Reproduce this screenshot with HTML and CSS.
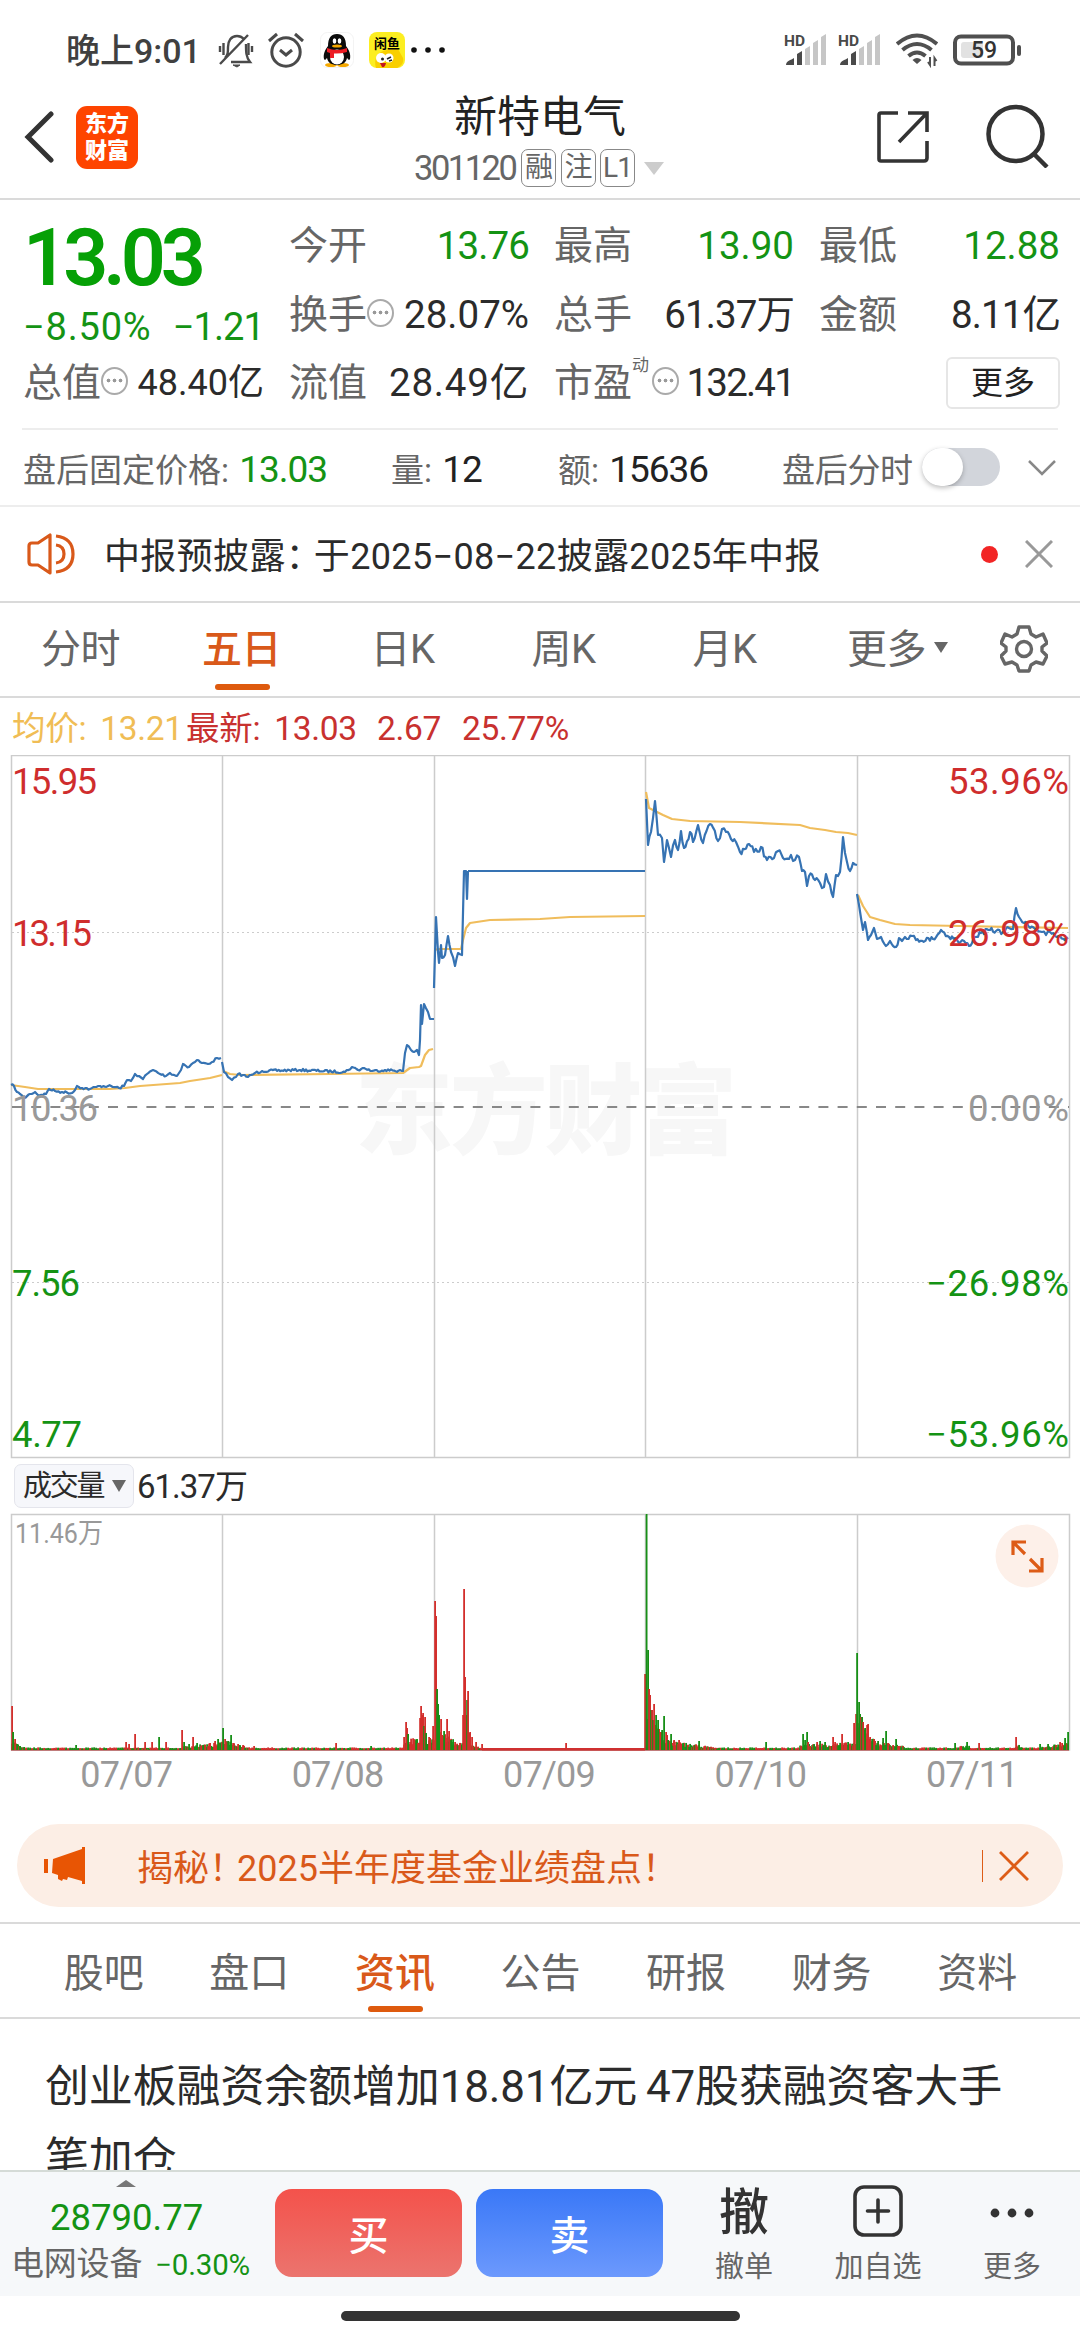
FILE: index.html
```html
<!DOCTYPE html>
<html lang="zh-CN">
<head>
    <meta charset="UTF-8">
    <meta name="viewport" content="width=device-width, initial-scale=1.0">
    <title>新特电气 301120</title>
    <link rel="stylesheet" href="styles.css">
</head>
<body>

    <!-- 状态栏 -->
    <div class="status-bar">
        <span class="time">晚上9:01</span>
        <svg class="ic-bell" width="36" height="36" viewBox="0 0 36 36" fill="none" stroke="#4a4a4a" stroke-width="2.4">
            <path d="M2 32 30 3M7 26c3-3 3-6 3-11 0-6 3-11 9-11 3 0 5 1 7 3M28 12c0 8 0 13 4 18H13" />
            <path d="M15 33h7l-3 2z" fill="#4a4a4a" stroke-width="1" />
            <path d="M2 14v6M5.500 11v12M30.500 11v12M34 14v6" />
        </svg>
        <svg class="ic-alarm" width="38" height="38" viewBox="0 0 38 38" fill="none" stroke="#4a4a4a" stroke-width="3">
            <circle cx="19" cy="21" r="14.200" />
            <path d="M13 19l6 5 6-5M2 10l8-7M36 10l-8-7" />
        </svg>
        <svg class="ic-qq" width="34" height="36" viewBox="0 0 34 36">
            <rect x=".5" y=".5" width="33" height="35" rx="7" fill="#fff" stroke="#f3f3f3" />
            <ellipse cx="11" cy="33" rx="6" ry="2" fill="#f5a800" />
            <ellipse cx="23" cy="33" rx="6" ry="2" fill="#f5a800" />
            <path d="M8 14C8 6 11 2 17 2s9 4 9 12c3 4 5 8 4 13-1 2-2 0-3-1-1 5-5 7-10 7S8 31 7 26c-1 1-2 3-3 1-1-5 1-9 4-13z" fill="#0b0b0b" />
            <ellipse cx="17" cy="25" rx="7" ry="7.500" fill="#fff" />
            <ellipse cx="14.500" cy="9" rx="1.800" ry="2.800" fill="#fff" />
            <ellipse cx="19.500" cy="9" rx="1.800" ry="2.800" fill="#fff" />
            <ellipse cx="17" cy="14" rx="5" ry="1.600" fill="#f5a800" />
            <path d="M7 16q10 4 20 0v4q-7 2-13 1.500V26h-4v-5l-3-1z" fill="#ec1c24" />
        </svg>
        <svg class="ic-fish" width="36" height="36" viewBox="0 0 36 36">
            <rect width="36" height="36" rx="8" fill="#fcee21" />
            <path d="M7 36c-3-9 2-17 11-18l11-1 5 9c1 5-2 8-6 10z" fill="#f9cf00" />
            <circle cx="12" cy="26" r="5" fill="#fff" />
            <circle cx="20" cy="26" r="4.500" fill="#fff" />
            <circle cx="13.500" cy="27" r="1.500" fill="#222" />
            <path d="M18 27l4-2M20 29l3-1" stroke="#222" stroke-width="1.500" />
            <path d="M11 31h6q-1 5-4 4z" fill="#c3161c" />
            <text x="18" y="15.500" text-anchor="middle" class="fish-text">闲鱼</text>
        </svg>
        <svg class="ic-dots" width="34" height="8" viewBox="0 0 34 8" fill="#111"><circle cx="3" cy="4" r="2.800" /><circle cx="17" cy="4" r="2.800" /><circle cx="31" cy="4" r="2.800" /></svg>

        <svg class="ic-signal" width="44" height="36" viewBox="-2 -4 44 36">
            <text x="-1" y="12" class="hd">HD</text>
            <path d="M1 31c0-4 5-5 8-7v7zM12 20l5-3v14h-5z" fill="#4a4a4a" />
            <path d="M20 15l5-3v19h-5zM28 9l5-3v25h-5zM36 3l5-3v31h-5z" fill="#c6c6c6" />
        </svg>
        <svg class="ic-signal" width="44" height="36" viewBox="-2 -4 44 36">
            <text x="-1" y="12" class="hd">HD</text>
            <path d="M1 31c0-4 5-5 8-7v7zM12 20l5-3v14h-5z" fill="#4a4a4a" />
            <path d="M20 15l5-3v19h-5zM28 9l5-3v25h-5zM36 3l5-3v31h-5z" fill="#c6c6c6" />
        </svg>
        <svg class="ic-wifi" width="42" height="36" viewBox="0 0 42 36" fill="none" stroke="#505050" stroke-width="4">
            <path d="M1 12q20-17 40 0M6.500 18q14.500-12 29 0M12.500 24q8.500-7 17 0" />
            <path d="M16.500 28q4.500-4 9 0L21 32z" fill="#505050" stroke="none" />
            <path d="M34 25v8l-2-3M38.500 34v-8l2 3" stroke-width="2" />
        </svg>
        <svg class="ic-battery" width="70" height="32" viewBox="0 0 70 32">
            <rect x="8" y="8" width="22" height="16" rx="3" fill="#e2e2e2" />
            <rect x="2" y="2.500" width="58" height="27" rx="6" fill="none" stroke="#4f4f4f" stroke-width="4" />
            <rect x="64" y="11" width="4" height="11" rx="2" fill="#4f4f4f" />
            <text x="31" y="24" text-anchor="middle" class="battery-text">59</text>
        </svg>
    </div>

    <!-- 标题栏 -->
    <div class="header">
        <svg class="back" width="30" height="52" viewBox="0 0 30 52" fill="none" stroke="#333" stroke-width="5" stroke-linecap="round"><path d="M27 3 4 26l23 23" /></svg>
        <div class="logo">东方<br>财富</div>
        <div class="title">
            <div class="name">新特电气</div>
            <div class="code"><span>301120</span><i>融</i><i>注</i><i>L1</i><b></b></div>
        </div>
        <svg class="share" width="54" height="54" viewBox="0 0 54 54" fill="none" stroke="#333" stroke-width="3.600"><path d="M22 3H5q-2 0-2 2v44q0 2 2 2h43q3 0 3-3V31M32 3h19v19M51 3 23 32" /></svg>
        <svg class="search" width="64" height="64" viewBox="0 0 64 64" fill="none" stroke="#333" stroke-width="4.500"><circle cx="29.500" cy="30" r="27" /><path d="M48 50l13 13" /></svg>
    </div>

    <!-- 行情 -->
    <div class="quote">
        <div class="col">
            <div class="price green">13.03</div>
            <div class="delta green"><span class="wide">−8.50%</span><span class="tight">−1.21</span></div>
            <div class="row small"><label>总值</label><em class="tip"></em><span>48.40亿</span></div>
        </div>
        <div class="col">
            <div class="row"><label>今开</label><span class="green tight">13.76</span></div>
            <div class="row"><label>换手</label><em class="tip"></em><span>28.07%</span></div>
            <div class="row"><label>流值</label><span class="wide">28.49亿</span></div>
        </div>
        <div class="col">
            <div class="row"><label>最高</label><span class="green">13.90</span></div>
            <div class="row"><label>总手</label><span class="tight">61.37万</span></div>
            <div class="row"><label>市盈</label><sup>动</sup><em class="tip"></em><span class="pe">132.41</span></div>
        </div>
        <div class="col">
            <div class="row"><label>最低</label><span class="green">12.88</span></div>
            <div class="row"><label>金额</label><span class="tight">8.11亿</span></div>
            <div class="row end"><button class="more">更多</button></div>
        </div>
    </div>

    <div class="after">
        <span class="after-price">盘后固定价格: <b class="green">13.03</b></span>
        <span class="after-vol">量: <b>12</b></span>
        <span class="after-amt">额: <b>15636</b></span>
        <span class="after-label">盘后分时</span>
        <div class="switch"><i></i></div>
        <svg class="chev" width="28" height="18" viewBox="0 0 28 18" fill="none" stroke="#888" stroke-width="2.500"><path d="M1 2l13 13L27 2" /></svg>
    </div>

    <div class="notice">
        <svg width="48" height="42" viewBox="0 0 48 42" fill="none" stroke="#d9591a" stroke-width="3.200" stroke-linejoin="round">
            <path d="M2 13q0-3 3-3h6l12-8v38l-12-8H5q-3 0-3-3zM29 12q8 1 8 9t-8 9M29 3q17 2 17 18T29 39" />
        </svg>
        <p>中报预披露<span class="punc">：</span>于2025−08−22披露2025年中报</p>
        <i class="red-dot"></i>
        <svg width="28" height="28" viewBox="0 0 28 28" stroke="#999" stroke-width="3"><path d="M1 1l26 26M27 1 1 27" /></svg>
    </div>

    <!-- K线切换 -->
    <div class="tabs">
        <span>分时</span>
        <span class="on">五日</span>
        <span>日K</span>
        <span>周K</span>
        <span>月K</span>
        <span class="tab-more">更多<b></b></span>
        <svg width="48" height="50" viewBox="0 0 48 50" fill="none" stroke="#666" stroke-width="3.400" stroke-linejoin="round">
            <path d="M19 3h10l2 7 5 3 7-3 4 9-5 4v4l5 5-4 8-7-2-5 3-2 6H19l-2-6-5-3-7 2-4-8 5-5v-4l-5-4 4-9 7 3 5-3z" />
            <circle cx="24" cy="25" r="7.500" />
        </svg>
    </div>

    <div class="legend"><span class="avg">均价: 13.21</span><span class="last">最新: 13.03</span><span class="chg">2.67</span><span class="pct">25.77%</span></div>

    <svg class="price-chart" width="1080" height="704" viewBox="0 755 1080 704">
        <g class="watermark"><text x="355" y="1146" textLength="382">东方财富</text></g>
        <path class="grid" d="M11.500 755.500H1069.500V1457.500H11.500zM222.500 755V1457M434.500 755V1457M645.500 755V1457M857.500 755V1457" />
        <path class="dotted" d="M12 932.500H1069M12 1282.500H1069" />
        <path class="dashed" d="M12 1107H1069" />
        <g id="avgLines"></g>
        <g id="priceLines"></g>
        <g class="axis">
            <text class="up" x="12" y="794" textLength="85">15.95</text>
            <text class="up" x="12" y="946" textLength="80">13.15</text>
            <text class="flat" x="12" y="1121" textLength="86">10.36</text>
            <text class="down" x="12" y="1296" textLength="68">7.56</text>
            <text class="down" x="12" y="1447" textLength="70">4.77</text>
            <text class="up" x="948" y="794" textLength="121">53.96%</text>
            <text class="up" x="948" y="946" textLength="121">26.98%</text>
            <text class="flat" x="968" y="1121" textLength="101">0.00%</text>
            <text class="down" x="926" y="1296" textLength="143">−26.98%</text>
            <text class="down" x="926" y="1447" textLength="143">−53.96%</text>
        </g>
    </svg>

    <div class="vol-head"><span class="chip">成交量<b></b></span><span class="vol-value">61.37万</span></div>

    <div class="vol-wrap">
        <svg class="vol-chart" width="1080" height="238" viewBox="0 1513 1080 238">
            <path class="grid" d="M11.500 1514.500H1069.500V1750H11.500zM222.500 1514V1750M434.500 1514V1750M645.500 1514V1750M857.500 1514V1750" />
            <text class="vol-max" x="15" y="1543" textLength="88" lengthAdjust="spacingAndGlyphs">11.46万</text>
            <g id="volBars"></g>
        </svg>
        <svg class="expand" width="64" height="64" viewBox="0 0 64 64" fill="none" stroke="#dd5c17" stroke-width="3.200">
            <circle cx="32" cy="32" r="31.500" fill="#fdf0e9" stroke="none" />
            <path d="M18 31V18h13M18 18l12 12M47 34v13H34M47 47 35 35" />
        </svg>
    </div>
    <div class="dates"><span>07/07</span><span>07/08</span><span>07/09</span><span>07/10</span><span>07/11</span></div>

    <div class="banner">
        <svg width="42" height="38" viewBox="0 0 42 38" fill="#e85504"><path d="M0 12h4v14H0zM9 12 38 2V0h3v37h-3v-3l-14-4-1 3-4-1-1 2-4-2v-4l-6-2z" /></svg>
        <p>揭秘<span class="punc">！</span>2025半年度基金业绩盘点！</p>
        <i></i>
        <svg width="30" height="30" viewBox="0 0 30 30" stroke="#dd5c17" stroke-width="2.800"><path d="M1 1l28 28M29 1 1 29" /></svg>
    </div>

    <!-- 资讯 -->
    <div class="info-tabs">
        <span>股吧</span><span>盘口</span><span class="on">资讯</span><span>公告</span><span>研报</span><span>财务</span><span>资料</span>
    </div>
    <div class="news">创业板融资余额增加18.81亿元 47股获融资客大手笔加仓</div>

    <!-- 底部栏 -->
    <div class="footer">
        <div class="index">
            <i></i>
            <div class="index-value green">28790.77</div>
            <div class="index-name">电网设备<span class="green">−0.30%</span></div>
        </div>
        <button class="trade buy">买</button>
        <button class="trade sell">卖</button>
        <div class="tool t1"><div class="tool-icon big">撤</div>撤单</div>
        <div class="tool t2"><div class="tool-icon"><svg width="50" height="52" viewBox="0 0 50 52" fill="none" stroke="#333" stroke-width="3.600" stroke-linecap="round"><rect x="2" y="2" width="46" height="48" rx="9" /><path d="M25 15v22M14.500 26h21" /></svg></div>加自选</div>
        <div class="tool t3"><div class="tool-icon"><svg width="44" height="12" viewBox="0 0 44 12" fill="#333"><circle cx="5" cy="6" r="4.400" /><circle cx="22" cy="6" r="4.400" /><circle cx="39" cy="6" r="4.400" /></svg></div>更多</div>
    </div>
    <div class="home"><i></i></div>

    <script src="chart.js"></script>
</body>
</html>
```

FILE: styles.css
```css
* {
    box-sizing: border-box;
}
body {
    margin: 0;
    width: 1080px;
    height: 2340px;
    overflow: hidden;
    background-color: #fff;
    color: #2b2b2b;
    font-family: Roboto, "Noto Sans CJK SC", sans-serif;
    display: flex;
    flex-direction: column;
}
body > * {
    flex: none;
}
svg {
    display: block;
    flex: none;
}
p {
    margin: 0;
}
i, em {
    font-style: normal;
}
button {
    font-family: inherit;
    padding: 0;
}
.green {
    color: #149314;
}

/* 状态栏 */
.status-bar {
    height: 85px;
    padding: 15px 57px 0 66px;
    display: flex;
    align-items: center;
    color: #404040;
}
.time {
    width: 152px;
    margin-top: -3px;
    font-size: 34px;
    font-weight: 500;
    white-space: nowrap;
}
.ic-alarm { margin-left: 13px; }
.ic-qq { margin-left: 15px; }
.ic-fish { margin-left: 15px; }
.ic-dots { margin-left: 6px; }
.ic-signal {
    margin-left: 10px;
    margin-top: -4px;
}
.ic-dots + .ic-signal { margin-left: auto; }
.ic-wifi { margin-left: 15px; }
.ic-battery { margin-left: 15px; }
.fish-text {
    font-size: 13px;
    font-weight: 700;
}
.hd {
    font-size: 15.500px;
    font-weight: 700;
    fill: #4a4a4a;
}
.battery-text {
    font-size: 23px;
    font-weight: 500;
    fill: #333;
}

/* 标题栏 */
.header {
    height: 115px;
    border-bottom: 2px solid #dadada;
    display: flex;
    padding: 0 30px 0 24px;
}
.back { margin-top: 26px; }
.logo {
    margin: 21px 0 0 22px;
    width: 62px;
    height: 63px;
    border-radius: 11px;
    background-color: #fe4400;
    color: #fff;
    font-size: 22px;
    line-height: 27px;
    font-weight: 900;
    text-align: center;
    padding-top: 4px;
}
.title {
    flex: 1;
    padding-left: 276px;
}
.name {
    width: 252px;
    font-size: 43px;
    line-height: 64px;
    height: 62px;
    text-align: center;
    color: #222;
}
.code {
    display: flex;
    height: 42px;
    align-items: center;
    font-size: 34.500px;
    line-height: 40px;
    letter-spacing: -1px;
    color: #666;
}
.code span { width: 107px; letter-spacing: -2.500px; }
.code i {
    width: 35px;
    height: 38px;
    line-height: 35px;
    margin-right: 4.500px;
    border: 1.500px solid #888;
    border-radius: 7px;
    font-size: 28px;
    text-align: center;
}
.code b {
    margin-left: 4px;
    border: 10px solid transparent;
    border-top: 13px solid #ccc;
    border-bottom: none;
}
.share { margin-top: 25px; }
.search { margin: 19px 0 0 56px; }

/* 行情 */
.quote {
    margin: 0 22px;
    height: 230px;
    padding: 12px 0 0 1px;
    border-bottom: 2px solid #ededed;
    display: grid;
    grid-template-columns: 241px 240px 240px 241px;
    column-gap: 25px;
}
.price {
    height: 88px;
    line-height: 92px;
    font-size: 79px;
    font-weight: 600;
    letter-spacing: -5px;
    color: #06a006;
}
.delta {
    height: 49px;
    line-height: 54px;
    font-size: 38px;
    display: flex;
    justify-content: space-between;
}
.wide { letter-spacing: .8px; }
.tight { letter-spacing: -.9px; }
.row {
    height: 68.500px;
    display: flex;
    align-items: center;
    font-size: 38.500px;
    line-height: 68px;
    white-space: nowrap;
}
.row label {
    color: #666;
    font-size: 39px;
}
.row span { margin-left: auto; }
.small span { font-size: 36px; }
.row .pe { letter-spacing: -1.800px; }
.row sup {
    align-self: flex-start;
    width: 18px;
    margin-right: 2px;
    font-size: 17px;
    line-height: 32px;
    color: #666;
}
.tip {
    width: 27px;
    height: 28px;
    border: 2px solid #aaa;
    border-radius: 50%;
    background-image: radial-gradient(circle, #999 1.600px, transparent 2.200px), radial-gradient(circle, #999 1.600px, transparent 2.200px), radial-gradient(circle, #999 1.600px, transparent 2.200px);
    background-size: 7px 7px;
    background-repeat: no-repeat;
    background-position: 2px 8px, 8px 8px, 14px 8px;
    margin-top: -4px;
}
.end { justify-content: flex-end; }
.more {
    width: 114px;
    height: 52px;
    border: 2px solid #e6e6e6;
    border-radius: 6px;
    background: #fff;
    color: #222;
    font-size: 32px;
    line-height: 46px;
}

.after {
    height: 77px;
    border-bottom: 2px solid #ededed;
    padding: 0 24px 0 23px;
    display: flex;
    align-items: center;
    font-size: 33px;
    color: #666;
    white-space: nowrap;
}
.after b {
    margin-left: 2px;
    font-weight: 400;
    font-size: 37px;
    color: #222;
    letter-spacing: -1px;
}
.after b.green { color: #149314; }
.after-price { width: 368px; }
.after-vol { width: 167px; }
.after-amt { width: 215px; }
.after-label {
    margin-left: auto;
    width: 131px;
    letter-spacing: -.3px;
}
.switch {
    width: 78px;
    height: 38px;
    margin: -1px 28px 0 9px;
    border-radius: 19px;
    background-color: #d2d5db;
}
.switch i {
    display: block;
    width: 41px;
    height: 38px;
    border-radius: 20px;
    background-color: #fff;
    box-shadow: 0 2px 5px rgba(0, 0, 0, .25);
}

.notice {
    height: 96px;
    padding: 0 27px 0 27px;
    border-bottom: 2px solid #dadada;
    display: flex;
    align-items: center;
    font-size: 36px;
}
.notice p {
    flex: 1;
    margin: -2px 0 0 29px;
    letter-spacing: .35px;
}
p .punc { letter-spacing: -8px; }
.red-dot {
    width: 17px;
    height: 17px;
    margin-right: 27px;
    border-radius: 50%;
    background-color: #f22525;
}

/* K线切换 */
.tabs {
    height: 95px;
    border-bottom: 2px solid #dadada;
    padding-right: 32px;
    display: flex;
    align-items: center;
    font-size: 40px;
    line-height: 95px;
    color: #666;
}
.tabs span {
    width: 161px;
    text-align: center;
    letter-spacing: -.5px;
}
.tabs .on, .info-tabs .on {
    color: #d9591a;
    font-weight: 500;
    position: relative;
}
.on::after {
    content: "";
    position: absolute;
    left: 50%;
    bottom: 7px;
    width: 55px;
    height: 6px;
    margin-left: -27px;
    border-radius: 3px;
    background-color: #de5a0e;
}
.tabs .tab-more {
    width: 185px;
}
.tab-more b {
    display: inline-block;
    margin: 0 0 10px 8px;
    border: 7px solid transparent;
    border-top: 11px solid #666;
    border-bottom: none;
}
.tabs svg {
    margin-left: auto;
    margin-top: -1px;
}

.legend {
    height: 57px;
    padding-left: 12px;
    display: flex;
    line-height: 62px;
    font-size: 33.500px;
    color: #c8312f;
    white-space: nowrap;
    word-spacing: 6px;
    letter-spacing: -.3px;
}
.avg { width: 174px; color: #f0bd55; }
.last { width: 191px; }
.chg { width: 85px; }

/* 图表 */
.grid {
    fill: none;
    stroke: #ccc;
    stroke-width: 1.500;
}
.dotted {
    stroke: #ccc;
    stroke-dasharray: 2 3;
}
.dashed {
    stroke: #888;
    stroke-width: 2;
    stroke-dasharray: 10 9.200;
}
#avgLines, #priceLines {
    fill: none;
    stroke: #f0bd5c;
    stroke-width: 2.200;
    stroke-linejoin: round;
}
#priceLines { stroke: #3673b3; }
.watermark {
    font-size: 98px;
    font-weight: 900;
    fill: #f7f7f7;
}
.axis { font-size: 36.500px; }
.up { fill: #cf2d2d; }
.down { fill: #149314; }
.flat { fill: #999; }
.vol-head {
    height: 54px;
    padding: 5px 0 0 14px;
    display: flex;
    line-height: 42px;
}
.chip {
    display: flex;
    align-items: center;
    width: 120px;
    height: 44px;
    padding-left: 8px;
    border: 1.500px solid #e4e5ec;
    border-radius: 7px;
    background-color: #f6f7fb;
    font-size: 29px;
    letter-spacing: -2.300px;
}
.chip b {
    margin-left: 9px;
    border: 7px solid transparent;
    border-top: 12px solid #666;
    border-bottom: none;
}
.vol-value {
    margin-left: 3px;
    font-size: 33px;
    line-height: 46px;
    letter-spacing: -1px;
}
.vol-wrap { position: relative; }
.vol-max {
    font-size: 28px;
    fill: #999;
}
.expand {
    position: absolute;
    left: 995px;
    top: 11px;
}
.dates {
    height: 73px;
    padding: 0 11px 0 12px;
    display: grid;
    grid-template-columns: repeat(5, 1fr);
    font-size: 36px;
    line-height: 48px;
    letter-spacing: -.8px;
    color: #999;
    text-align: center;
}
.dates span { padding-left: 17px; }

.banner {
    height: 83px;
    margin: 0 17px;
    padding: 0 34px 0 27px;
    border-radius: 42px;
    background-color: #fceee5;
    color: #d9591a;
    font-size: 36px;
    display: flex;
    align-items: center;
}
.banner p {
    flex: 1;
    margin: -2px 0 0 51px;
}
.banner i {
    width: 1.500px;
    height: 32px;
    margin-right: 16px;
    background-color: #dd5c17;
}

/* 资讯 */
.info-tabs {
    height: 97px;
    margin-top: 15px;
    border-top: 2px solid #dadada;
    border-bottom: 2px solid #dadada;
    padding: 0 30px 0 31px;
    display: grid;
    grid-template-columns: repeat(7, 1fr);
    font-size: 40px;
    line-height: 99px;
    text-align: center;
    color: #666;
}
.info-tabs .on::after { bottom: 11px; }
.news {
    height: 151px;
    overflow: hidden;
    padding: 33px 60px 0 45px;
    font-size: 44px;
    line-height: 71.500px;
    letter-spacing: -.15px;
    word-spacing: -2px;
}

/* 底部栏 */
.footer {
    height: 126px;
    background-color: #f6f8fa;
    border-top: 2px solid #d5dbd7;
    display: flex;
    white-space: nowrap;
}
.index {
    width: 275px;
    padding-left: 11px;
}
.index i {
    display: block;
    width: 20px;
    margin: 8px 0 0 105px;
    border: 10px solid transparent;
    border-bottom: 7px solid #777;
    border-top: none;
}
.index-value {
    margin-left: 39px;
    font-size: 36.500px;
    line-height: 62px;
}
.index-name {
    font-size: 33px;
    line-height: 30px;
    letter-spacing: -.2px;
    color: #666;
}
.index-name span {
    margin-left: 13px;
    font-size: 29.500px;
}
.trade {
    width: 187px;
    height: 91px;
    margin-top: 17px;
    border: none;
    border-radius: 17px;
    color: #fff;
    font-size: 40px;
    font-weight: 500;
}
.trade { height: 88px; }
.buy { background: linear-gradient(#f4524b, #eb746e); }
.sell {
    margin-left: 14px;
    background: linear-gradient(#3a78f7, #6c99fd);
}
.tool {
    width: 134px;
    padding-top: 8px;
    text-align: center;
    font-size: 29px;
    line-height: 42px;
    color: #666;
}
.t1 { margin-left: 14px; }
.tool-icon {
    display: flex;
    height: 66px;
    align-items: center;
    justify-content: center;
}
.t2 .tool-icon { padding-bottom: 4px; }
.big {
    font-size: 50px;
    font-weight: 500;
    color: #333;
}
.home {
    display: flex;
    justify-content: center;
    padding-top: 15px;
}
.home i {
    width: 399px;
    height: 10px;
    border-radius: 5px;
    background-color: #333;
}
```

FILE: chart.js
```js
// 伪随机数，保证每次绘制结果一致
let seed = 7;
function rnd() {
    seed = (seed * 16807) % 2147483647;
    return seed / 2147483647;
}

const avg = [
    "11,1085 25,1087 38,1089 110,1089 125,1088 140,1086 180,1083 190,1081 210,1078 222,1075",
    "223,1071 230,1074 240,1075 330,1074 403,1073 410,1068 419,1067 421,1066 425,1055 429,1050 433,1049",
    "435,950 438,949 461,949 463,940 466,928 470,923 490,920 540,919 570,917 645,916",
    "646,792 649,808 655,811 663,815 672,819 690,821 740,822 800,825 810,828 825,830 836,832 848,833 857,835",
    "858,895 863,906 870,917 880,920 895,924 910,925 960,926 1068,928"
];
const price = [
    "11,1085 14,1086 17,1092 20,1094 24,1098 30,1094 35,1092 38,1095 46,1094 49,1089 55,1091 62,1092 72,1093 75,1090 77,1086 82,1088 90,1089 100,1086 108,1086 119,1088 124,1086 127,1080 131,1081 135,1074 139,1076 143,1079 147,1074 153,1070 160,1074 166,1076 170,1073 177,1076 181,1070 183,1064 189,1067 193,1063 197,1060 202,1063 208,1064 212,1062 217,1058 221,1058",
    "222,1062 224,1072 228,1077 232,1080 236,1077 238,1074 243,1075 248,1077 255,1073 262,1071 300,1070 345,1072 352,1067 358,1070 364,1068 372,1071 385,1070 403,1071 405,1053 407,1045 411,1050 414,1052 417,1050 419,1055 420,1040 421,1005 422,1024 424,1004 428,1012 430,1019 434,1019",
    "434,988 436,917 438,952 439,963 441,945 442,958 445,955 448,936 451,952 455,966 458,953 462,955 464,871 466,871 467,899 468,871",
    "646,799 648,845 651,832 655,801 658,835 662,838 664,862 667,840 671,857 675,840 678,850 681,831 684,848 690,832 693,842 698,825 703,843 710,824 718,841 722,829 726,832 731,839 736,842 740,852 749,844 754,852 761,847 767,860 774,858 778,851 783,858 789,859 791,855 795,860 799,857 802,871 805,872 807,886 809,876 815,880 820,883 824,887 826,874 830,885 833,897 836,875 840,872 843,837 845,853 847,862 850,871 853,863 857,865",
    "857,894 859,905 861,918 863,930 865,922 868,940 871,935 874,928 877,939 881,937 886,946 890,941 896,947 899,938 902,941 905,937 912,936 916,940 933,939 941,930 949,937 955,938 959,943 964,941 969,946 975,937 981,933 990,930 996,931 1003,932 1009,928 1013,929 1016,908 1019,917 1024,923 1033,927 1042,932 1046,935 1050,932 1057,937 1068,939"
];

function line(points) {
    return `<polyline points="${points}"/>`;
}

// 在两点之间补上小幅波动
function jitter(points, size) {
    const p = points.split(" ").map(s => s.split(",").map(Number));
    const out = [p[0]];
    for (let k = 1; k < p.length; k++) {
        const [x0, y0] = p[k - 1];
        const [x1, y1] = p[k];
        const n = Math.floor((x1 - x0) / 1.5);
        for (let j = 1; j < n; j++) {
            const t = j / n;
            out.push([x0 + (x1 - x0) * t, y0 + (y1 - y0) * t + (rnd() - 0.5) * size]);
        }
        out.push(p[k]);
    }
    return out.map(q => q[0].toFixed(1) + "," + q[1].toFixed(1)).join(" ");
}

const sizes = [2.5, 2.5, 4, 7, 5];
document.getElementById("avgLines").innerHTML = avg.map(line).join("");
document.getElementById("priceLines").innerHTML = price.map((p, i) => line(jitter(p, sizes[i]))).join("") + line("468,871 645,871");

// 成交量：x 高度 颜色
const vols = "12 44 r,13 18 g,15 11 r,17 6 g,20 4 g,24 3 g,76 5 g,126 8 r,129 6 r,135 16 r,145 8 r,152 8 r,159 13 g,166 8 r,182 20 r,184 8 g,189 6 g,193 13 r,197 7 g,203 5 g,210 7 r,215 9 r,218 11 g,223 22 g,225 11 r,228 9 g,231 15 g,233 7 r,238 6 r,243 5 r,254 4 r,336 7 r,371 4 g,404 13 r,406 28 r,407 22 r,408 16 g,410 8 r,414 9 r,418 7 r,420 32 r,421 44 r,422 35 r,423 37 r,424 24 g,425 33 r,426 17 g,429 13 r,430 12 r,433 24 r,435 149 r,436 134 r,437 61 g,438 46 g,439 35 g,441 31 r,442 15 r,444 19 g,447 31 r,449 19 r,451 10 g,453 8 g,455 8 r,460 7 r,463 35 r,464 161 r,465 73 r,466 35 r,467 50 g,468 59 r,469 17 r,470 18 r,472 13 r,476 8 r,482 6 r,566 7 r,645 76 r,646.500 236 g,648 100 g,649 61 r,650 55 r,651 40 g,652 40 r,653 30 g,654 46 r,655 25 r,656 35 g,658 30 g,659 18 g,660 18 r,662 20 g,664 34 g,666 18 r,667 15 r,668 10 g,671 16 g,674 10 r,679 10 r,683 7 g,699 9 g,766 8 g,803 16 g,805 10 g,807 18 g,808 8 r,817 8 r,820 9 g,825 8 g,833 13 r,835 8 r,842 16 r,848 8 g,854 27 r,856 36 r,857 97 g,859 48 g,860 36 g,861 33 r,862 33 g,863 28 r,865 22 g,867 25 r,868 26 r,870 13 r,872 11 g,874 11 r,878 9 g,883 12 g,886 19 g,888 7 r,896 11 g,955 7 g,967 8 g,979 7 r,1016 13 r,1040 6 g,1048 6 g,1060 8 r,1062 7 r,1065 12 g,1068 18 g".split(",").map(s => s.split(" "));

// 开盘和异动附近的密集小柱：起点 终点 起始高度 结束高度
const busy = [[12, 24, 10, 2], [124, 150, 2, 2], [184, 222, 4, 8], [222, 250, 12, 3], [404, 434, 12, 12], [435, 460, 22, 7], [460, 480, 8, 3], [646, 668, 42, 10], [668, 720, 10, 2], [800, 856, 6, 8], [857, 875, 34, 10], [875, 905, 10, 4], [960, 970, 4, 5], [1016, 1024, 7, 2], [1040, 1069, 3, 8]];

let bars = '<rect x="11" y="1748.500" width="1058" height="2" fill="#a82020"/><rect x="482" y="1748" width="163" height="2.500" fill="#cf3030"/>';
function bar(x, h, red) {
    bars += `<rect x="${x - 0.8}" y="${1750 - h}" width="1.800" height="${h}" fill="${red ? "#d32f2c" : "#178f17"}"/>`;
}
for (let x = 12; x < 1069; x += 2) {
    if (x < 482 || x > 645) {
        bar(x, 1.5 + rnd() * 1.2, rnd() > 0.5);
    }
}
busy.forEach(function ([a, b, h0, h1]) {
    for (let x = a; x < b; x += 1) {
        const h = h0 + (h1 - h0) * (x - a) / (b - a);
        bar(x, h * (0.4 + rnd() * 0.6), rnd() > 0.5);
    }
});
vols.forEach(v => bar(+v[0], +v[1], v[2] === "r"));
document.getElementById("volBars").innerHTML = bars;
```
